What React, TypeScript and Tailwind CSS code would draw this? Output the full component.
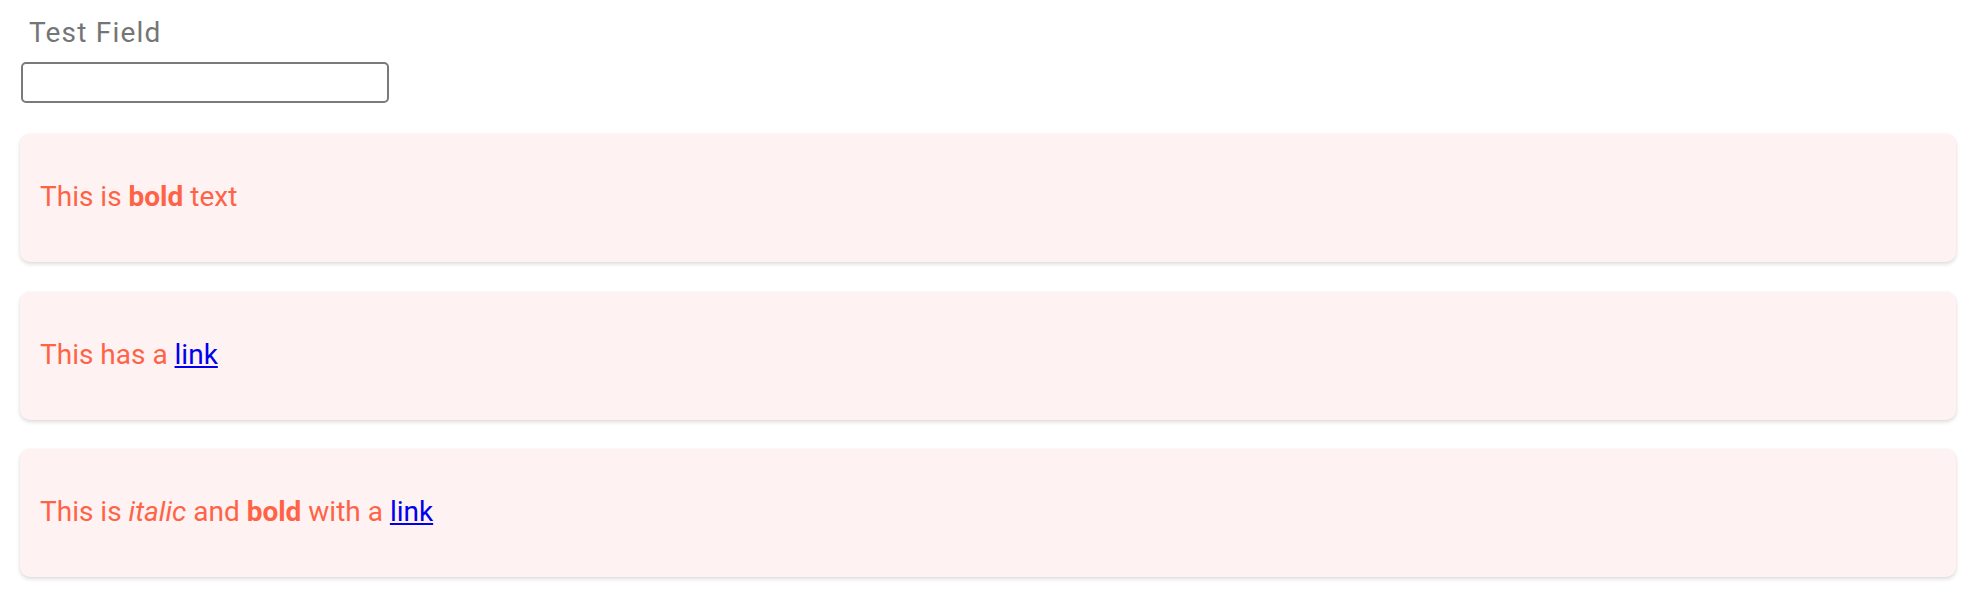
import { FunctionComponent, ReactNode } from "react";

const Card: FunctionComponent<{ children: ReactNode }> = ({ children }) => {
  return (
    <div className="w-full h-[128px] flex items-center px-[20px] pb-[2px] rounded-[10px] bg-[#fff2f2] shadow-[0_2px_4px_rgba(0,0,0,0.14),0_0_2px_rgba(0,0,0,0.04)]">
      <p className="text-[28px] leading-none text-[#ff6347]">{children}</p>
    </div>
  );
};

const Link: FunctionComponent<{ children: ReactNode }> = ({ children }) => (
  <a href="#" className="text-[#0000ee] underline">
    {children}
  </a>
);

const App = () => {
  return (
    <div className="w-full min-h-screen bg-white px-[20px] pt-[14px] font-['Roboto',sans-serif]">
      <label className="block pl-[9px] text-[28px] leading-[38px] tracking-[1.2px] text-[#757575]">
        Test Field
      </label>
      <input
        type="text"
        className="block mt-[10px] ml-[1px] w-[368px] h-[41px] border-2 border-[#7a7a7a] rounded-[5px] bg-white outline-none"
      />
      <div className="flex flex-col gap-[29.5px] mt-[31px]">
        <Card>
          This is <strong className="font-bold">bold</strong> text
        </Card>
        <Card>
          This has a <Link>link</Link>
        </Card>
        <Card>
          This is <em className="italic">italic</em> and{" "}
          <strong className="font-bold">bold</strong> with a <Link>link</Link>
        </Card>
      </div>
    </div>
  );
};

export default App;
